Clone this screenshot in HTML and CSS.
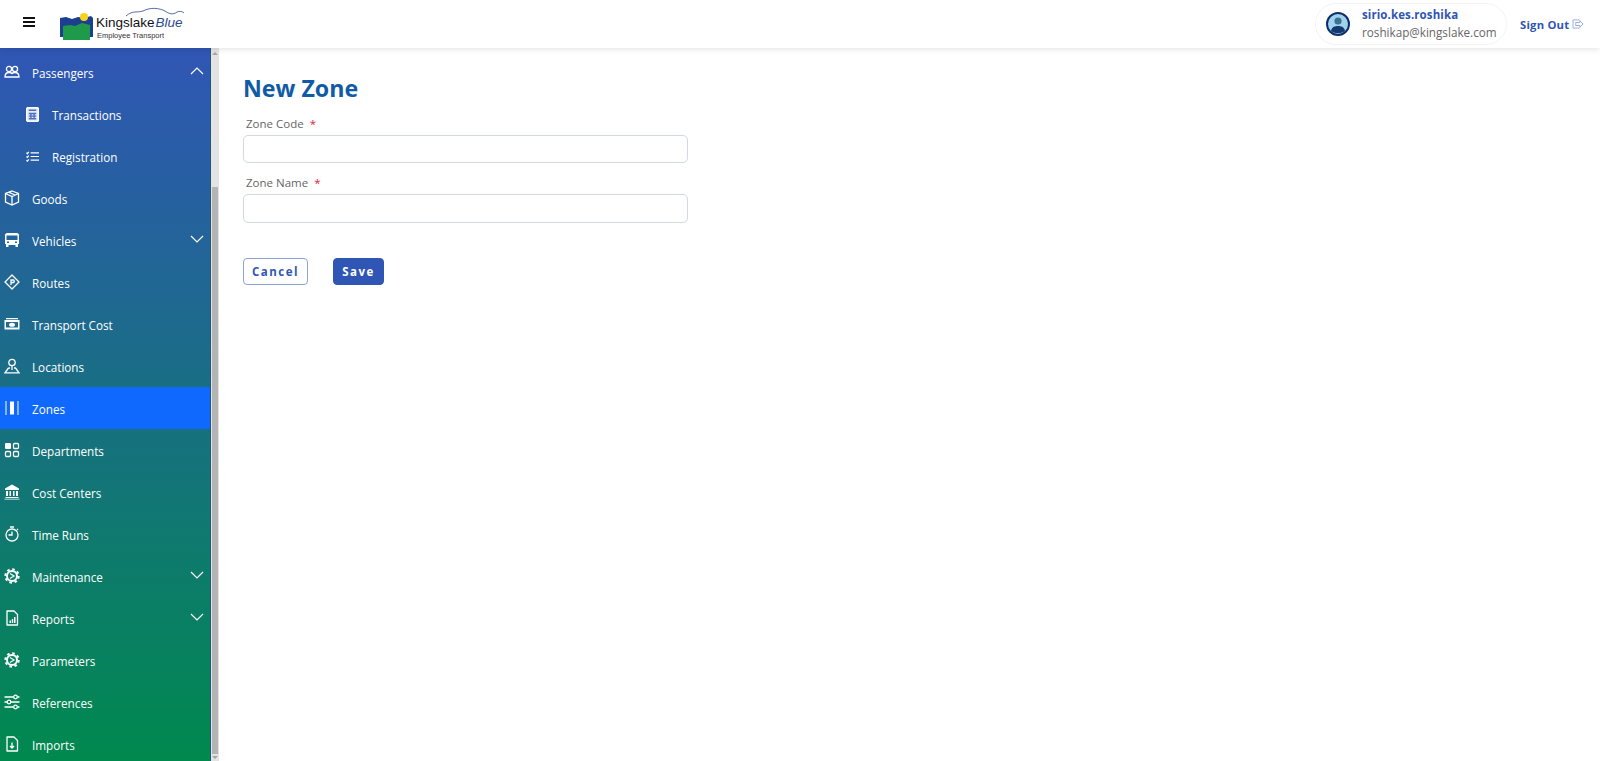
FILE: index.html
```html
<!DOCTYPE html>
<html lang="en">
<head>
  <meta charset="UTF-8">
  <title>New Zone</title>
  <link rel="stylesheet" href="styles.css">
</head>
<body>
  <header class="topbar">
    <div class="menu-btn"><span></span><span></span><span></span></div>
    <div class="logo">
      <svg class="logo-mark" width="33" height="27" viewBox="0 0 33 27">
        <path d="M0 5 L6 4 L12 6 L18 4 L24 5 L31 3 L33 5 L33 24 L30 24 L30 27 L3 27 L3 24 L0 24 Z" fill="#1d3f8f"/>
        <path d="M3 13 L10 12 L15 13 L22 10 L30 12 L30 27 L3 27 Z" fill="#1f9a4b"/>
        <circle cx="24" cy="4" r="4" fill="#f7d21d"/>
      </svg>
      <div class="logo-text">
        <svg class="logo-cloud" width="60" height="10" viewBox="0 0 60 10">
          <path d="M1 9 C8 3 12 6 18 4 C26 0 34 1 40 4 C44 7 48 8 52 5 C54 4 57 4 59 6" fill="none" stroke="#2a4a8f" stroke-width="0.8"/>
        </svg>
        <div class="logo-name">Kingslake<em>Blue</em></div>
        <div class="logo-sub">Employee Transport</div>
      </div>
    </div>
    <div class="topbar-right">
      <div class="user-pill">
        <svg class="avatar" width="24" height="24" viewBox="0 0 24 24">
          <circle cx="12" cy="12" r="11" fill="#9fd3ea" stroke="#0d2f6b" stroke-width="2"/>
          <circle cx="12" cy="9" r="3.600" fill="#3c6f96"/>
          <path d="M5 19 C6 14.500 9 14 12 14 C15 14 18 14.500 19 19 C15 22 9 22 5 19 Z" fill="#123a70"/>
        </svg>
        <div class="user-info">
          <div class="user-name">sirio.kes.roshika</div>
          <div class="user-mail">roshikap@kingslake.com</div>
        </div>
      </div>
      <a class="signout">Sign Out
        <svg width="12" height="10" viewBox="0 0 13 11" fill="none" stroke="#8fa6dc" stroke-width="1">
          <path d="M8 1 H1 V10 H8"/>
          <path d="M4 3.800 H8.500 V1.800 L12 5.500 L8.500 9.200 V7.200 H4 Z"/>
        </svg>
      </a>
    </div>
  </header>

  <div class="layout">
    <nav class="sidebar">
      <a class="nav-item">
        <svg class="nav-icon" viewBox="0 0 16 16"><circle cx="5" cy="5" r="2.600"/><circle cx="11" cy="5" r="2.600"/><path d="M1 13 C1 9.500 3 8.500 5 8.500 C7 8.500 8 9.500 8 9.500 C8 9.500 9 8.500 11 8.500 C13 8.500 15 9.500 15 13 Z"/></svg>
        <span class="nav-label">Passengers</span>
        <svg class="chevron" viewBox="0 0 14 8"><path d="M1 7 L7 1 L13 7"/></svg>
      </a>
      <a class="nav-item sub">
        <svg class="nav-icon sub-icon" viewBox="0 0 12 14"><rect x="0.500" y="0.500" width="11" height="13" rx="1.500" fill="#dfe9fb"/><path d="M2.500 3 H9.500 M2.500 6 H9.500 M2.500 8.500 H9.500 M2.500 11 H9.500 M4.500 6 V11.500 M7.500 6 V11.500" stroke="#4d6fb8"/></svg>
        <span class="nav-label">Transactions</span>
      </a>
      <a class="nav-item sub">
        <svg class="nav-icon sub-icon" viewBox="0 0 14 12"><path d="M5 2 H14 M5 6 H14 M5 10 H14 M0.500 2 L1.500 3 L3 1 M0.500 6 L1.500 7 L3 5 M0.500 10 L1.500 11 L3 9"/></svg>
        <span class="nav-label">Registration</span>
      </a>
      <a class="nav-item">
        <svg class="nav-icon" viewBox="0 0 16 16"><path d="M8 1 L14.500 3.500 V12 L8 15 L1.500 12 V3.500 Z M1.500 3.500 L8 6.500 L14.500 3.500 M8 6.500 V15 M4.500 2.200 L11 5"/></svg>
        <span class="nav-label">Goods</span>
      </a>
      <a class="nav-item">
        <svg class="nav-icon" viewBox="0 0 16 16"><path class="solid" d="M3 1 H13 C14 1 15 2 15 3 V12 H14 V15 H11.500 V13 H4.500 V15 H2 V12 H1 V3 C1 2 2 1 3 1 Z M2.500 3.500 V8 H13.500 V3.500 Z M3 9.500 V11 H5 V9.500 Z M11 9.500 V11 H13 V9.500 Z" fill-rule="evenodd"/></svg>
        <span class="nav-label">Vehicles</span>
        <svg class="chevron" viewBox="0 0 14 8"><path d="M1 1 L7 7 L13 1"/></svg>
      </a>
      <a class="nav-item">
        <svg class="nav-icon" viewBox="0 0 16 16"><path d="M8 1 L15 8 L8 15 L1 8 Z" stroke-linejoin="round"/><path d="M7 11 V6 H9.500 C10.500 6 10.500 8.500 9.500 8.500 H7" stroke-width="1.300"/></svg>
        <span class="nav-label">Routes</span>
      </a>
      <a class="nav-item">
        <svg class="nav-icon" viewBox="0 0 16 16"><path class="solid" d="M2 2 H14 V3.200 H2 Z M0.500 4 H15.500 V13.500 H0.500 Z M2 6 V11.500 H14 V6 Z" fill-rule="evenodd"/><ellipse class="solid" cx="8" cy="8.800" rx="3" ry="2"/></svg>
        <span class="nav-label">Transport Cost</span>
      </a>
      <a class="nav-item">
        <svg class="nav-icon" viewBox="0 0 16 16"><circle cx="8" cy="4.500" r="3.200"/><path d="M8 7.700 V12 M4.500 10 L1 14.800 H15 L11.500 10 H10 M6 10 H4.500"/></svg>
        <span class="nav-label">Locations</span>
      </a>
      <a class="nav-item active">
        <svg class="nav-icon" viewBox="0 0 16 16"><path class="solid" d="M1.500 1 H2.500 V15 H1.500 Z M13.500 1 H14.500 V15 H13.500 Z M6 1.500 H10 V14.500 H6 Z"/></svg>
        <span class="nav-label">Zones</span>
      </a>
      <a class="nav-item">
        <svg class="nav-icon" viewBox="0 0 16 16"><rect class="solid" x="1" y="1" width="6" height="6" rx="1"/><rect x="9.500" y="1.500" width="5" height="5" rx="1"/><rect x="1.500" y="9.500" width="5" height="5" rx="1"/><rect x="9.500" y="9.500" width="5" height="5" rx="1"/></svg>
        <span class="nav-label">Departments</span>
      </a>
      <a class="nav-item">
        <svg class="nav-icon" viewBox="0 0 16 16"><path class="solid" d="M8 0.500 L15 4.500 V6 H1 V4.500 Z M2 7 H4 V12 H2 Z M5.500 7 H7 V12 H5.500 Z M9 7 H10.500 V12 H9 Z M12 7 H14 V12 H12 Z M1.500 13 H14.500 V14 H1.500 Z M0.500 14.800 H15.500 V15.600 H0.500 Z"/></svg>
        <span class="nav-label">Cost Centers</span>
      </a>
      <a class="nav-item">
        <svg class="nav-icon" viewBox="0 0 16 16"><circle cx="8" cy="9" r="6"/><path d="M8 5.500 V9 H4.500 M6 1 H10 M13 3 L14 4"/></svg>
        <span class="nav-label">Time Runs</span>
      </a>
      <a class="nav-item">
        <svg class="nav-icon" viewBox="0 0 16 16"><circle cx="8" cy="8" r="5" stroke-width="2"/><circle cx="8" cy="8" r="6.700" stroke-width="2" stroke-dasharray="2.600 2.660"/><path d="M6 5.500 L10 8 L6 10.500" stroke-width="1.200"/></svg>
        <span class="nav-label">Maintenance</span>
        <svg class="chevron" viewBox="0 0 14 8"><path d="M1 1 L7 7 L13 1"/></svg>
      </a>
      <a class="nav-item">
        <svg class="nav-icon" viewBox="0 0 16 16"><path d="M3 1 H10 L13.500 4.500 V15 H3 Z" stroke-linejoin="round"/><path class="solid" d="M5.500 10.500 H7 V13 H5.500 Z M7.800 9 H9.200 V13 H7.800 Z M10 7 H11.500 V13 H10 Z"/></svg>
        <span class="nav-label">Reports</span>
        <svg class="chevron" viewBox="0 0 14 8"><path d="M1 1 L7 7 L13 1"/></svg>
      </a>
      <a class="nav-item">
        <svg class="nav-icon" viewBox="0 0 16 16"><circle cx="8" cy="8" r="5" stroke-width="2"/><circle cx="8" cy="8" r="6.700" stroke-width="2" stroke-dasharray="2.600 2.660"/><path d="M6 5.500 L10 8 L6 10.500" stroke-width="1.200"/></svg>
        <span class="nav-label">Parameters</span>
      </a>
      <a class="nav-item">
        <svg class="nav-icon" viewBox="0 0 16 16"><path d="M0.500 3 H9.500 M13.500 3 H15.500 M0.500 8 H3 M7 8 H15.500 M0.500 13 H9.500 M13.500 13 H15.500"/><circle cx="11.500" cy="3" r="1.800"/><circle cx="5" cy="8" r="1.800"/><circle cx="11.500" cy="13" r="1.800"/></svg>
        <span class="nav-label">References</span>
      </a>
      <a class="nav-item">
        <svg class="nav-icon" viewBox="0 0 16 16"><path d="M3 1 H10 L13.500 4.500 V15 H3 Z" stroke-linejoin="round"/><path d="M8 6.500 V12 M6 10 L8 12 L10 10"/></svg>
        <span class="nav-label">Imports</span>
      </a>
    </nav>
    <div class="scrollbar">
      <div class="scroll-arrow up"></div>
      <div class="scroll-thumb"></div>
      <div class="scroll-arrow down"></div>
    </div>

    <main class="content">
      <h1 class="page-title">New Zone</h1>
      <form class="zone-form">
        <div class="field">
          <label class="field-label">Zone Code <span class="req">*</span></label>
          <input class="field-input" type="text">
        </div>
        <div class="field">
          <label class="field-label">Zone Name <span class="req">*</span></label>
          <input class="field-input" type="text">
        </div>
        <div class="form-actions">
          <button type="button" class="btn btn-cancel">Cancel</button>
          <button type="button" class="btn btn-save">Save</button>
        </div>
      </form>
    </main>
  </div>
</body>
</html>
```

FILE: styles.css
```css
* { box-sizing: border-box; }
html, body { height: 100%; }
body {
  margin: 0;
  overflow: hidden;
  font-family: "Open Sans", sans-serif;
  background: #fff;
  display: flex;
  flex-direction: column;
}

/* top bar */
.topbar {
  height: 48px;
  flex: none;
  display: flex;
  align-items: center;
  background: #fff;
  box-shadow: 0 1px 6px rgba(0, 0, 0, 0.12);
  position: relative;
  z-index: 2;
}
.menu-btn {
  width: 12px;
  margin-left: 23px;
  margin-top: -4px;
  display: flex;
  flex-direction: column;
  gap: 2px;
}
.menu-btn span {
  height: 2px;
  background: #111;
}
.logo {
  display: flex;
  align-items: flex-end;
  margin-left: 25px;
  margin-top: 5px;
}
.logo-mark { display: block; }
.logo-text {
  position: relative;
  margin-left: 3px;
  font-family: "Liberation Sans", sans-serif;
}
.logo-cloud {
  position: absolute;
  top: -8px;
  left: 29px;
}
.logo-name {
  font-size: 13.500px;
  line-height: 16px;
  color: #111;
}
.logo-name em {
  margin-left: 1px;
  color: #2a4a8f;
}
.logo-sub {
  font-size: 7.500px;
  line-height: 9px;
  margin-left: 1px;
  color: #333;
}
.topbar-right {
  margin-left: auto;
  display: flex;
  align-items: center;
}
.user-pill {
  width: 192px;
  height: 42px;
  margin-right: 13px;
  margin-top: -1px;
  padding-left: 10px;
  display: flex;
  align-items: center;
  gap: 12px;
  border: 1px solid #f3f3f3;
  border-radius: 21px;
}
.avatar { flex: none; }
.user-name {
  font-size: 11.500px;
  line-height: 17px;
  font-weight: 700;
  letter-spacing: 0.1px;
  color: #2f55b3;
}
.user-mail {
  font-size: 11.700px;
  line-height: 18px;
  color: #666;
}
.signout {
  width: 80px;
  font-size: 11.300px;
  font-weight: 700;
  letter-spacing: 0.2px;
  color: #2f55b3;
  display: flex;
  align-items: center;
  gap: 3px;
}

/* sidebar */
.layout {
  flex: 1;
  min-height: 0;
  display: flex;
}
.sidebar {
  width: 211px;
  flex: none;
  padding-top: 3px;
  overflow: hidden;
  border-right: 1px solid #1c5a78;
  background: linear-gradient(180deg, #3056b5 0%, #00894f 100%);
}
.nav-item {
  height: 42px;
  display: flex;
  align-items: center;
  padding-left: 4px;
  color: #fff;
}
.nav-item.sub { padding-left: 26px; }
.nav-item.active { background: #0f69ff; }
.nav-icon {
  width: 16px;
  height: 16px;
  flex: none;
  fill: none;
  stroke: #fff;
  stroke-width: 1.300;
}
.nav-icon .solid {
  fill: #fff;
  stroke: none;
}
.sub-icon {
  width: 13px;
  height: 15px;
}
.nav-label {
  margin-left: 12px;
  margin-top: 2px;
  font-size: 11.700px;
  font-weight: 500;
}
.sub .nav-label {
  margin-left: 13px;
  margin-top: 1px;
}
.chevron {
  width: 14px;
  height: 8px;
  margin-left: auto;
  margin-right: 6px;
  margin-top: -2px;
  fill: none;
  stroke: #fff;
  stroke-width: 1.200;
}
.scrollbar {
  width: 8px;
  flex: none;
  display: flex;
  flex-direction: column;
  align-items: center;
  background: #e3e3e3;
  padding: 4px 1px 2px;
}
.scroll-arrow {
  flex: none;
  border-left: 3px solid transparent;
  border-right: 3px solid transparent;
}
.scroll-arrow.up { border-bottom: 3px solid #a5a5a5; }
.scroll-arrow.down { border-top: 3px solid #a5a5a5; }
.scroll-thumb {
  flex: 1;
  width: 100%;
  margin-top: 132px;
  margin-bottom: 2px;
  background: #b4b4b4;
}

/* form */
.content {
  flex: 1;
  padding: 26px 24px;
}
.page-title {
  margin: 0;
  font-size: 23.200px;
  line-height: 28px;
  font-weight: 700;
  color: #105ba5;
}
.zone-form { width: 445px; }
.field { margin-top: 13px; }
.field + .field { margin-top: 11px; }
.field-label {
  display: block;
  padding-left: 3px;
  font-size: 11.500px;
  line-height: 17px;
  color: #666;
}
.req {
  margin-left: 3px;
  color: #e0243a;
}
.field-input {
  display: block;
  width: 100%;
  height: 28px;
  margin-top: 3px;
  border: 1px solid #d3d8e2;
  border-radius: 5px;
  background: #fff;
}
.field + .field .field-input { height: 29px; }
.form-actions {
  display: flex;
  gap: 25px;
  margin-top: 35px;
}
.btn {
  height: 27px;
  padding: 0;
  font-family: inherit;
  font-size: 11.500px;
  font-weight: 700;
  letter-spacing: 1.500px;
  border-radius: 4px;
  border: 1px solid #3056b5;
}
.btn-cancel {
  width: 65px;
  background: #fff;
  color: #3056b5;
  border-color: #8ea3d8;
}
.btn-save {
  width: 51px;
  background: #3056b5;
  color: #fff;
}
```
